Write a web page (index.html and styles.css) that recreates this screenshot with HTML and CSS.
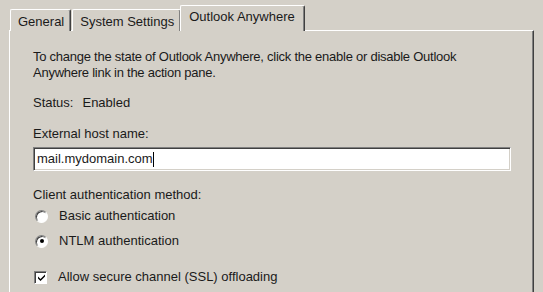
FILE: index.html
```html
<!DOCTYPE html>
<html>
<head>
<meta charset="utf-8">
<link rel="stylesheet" href="styles.css">
</head>
<body>
<div class="dialog">
  <div class="tabs">
    <div class="tab first">General</div>
    <div class="tab">System Settings</div>
    <div class="tab active">Outlook Anywhere</div>
  </div>
  <div class="panel">
    <p class="intro">To change the state of Outlook Anywhere, click the enable or disable Outlook Anywhere link in the action pane.</p>
    <div class="status"><span class="status-label">Status:</span>Enabled</div>
    <div class="field-label">External host name:</div>
    <div class="input"><span class="value">mail.mydomain.com</span><span class="caret"></span></div>
    <div class="group-label">Client authentication method:</div>
    <div class="option basic"><span class="radio"></span>Basic authentication</div>
    <div class="option ntlm"><span class="radio checked"><span class="dot"></span></span>NTLM authentication</div>
    <div class="option check-row"><span class="checkbox"><svg width="9" height="9" viewBox="0 0 9 9"><path d="M1 3.5 L3.5 6 L8 1.5 L8 3.5 L3.5 8 L1 5.5 Z" fill="#000"/></svg></span>Allow secure channel (SSL) offloading</div>
  </div>
</div>
</body>
</html>
```
FILE: styles.css
```css
html, body {
  margin: 0;
  padding: 0;
  background: #d4d0c8;
  width: 543px;
  height: 292px;
  overflow: hidden;
}
body {
  font-family: "Liberation Sans", Arial, sans-serif;
  font-size: 13px;
  line-height: 16px;
  color: #1a1a1a;
}
.dialog {
  padding: 5px 0 0 9px;
}
.tabs {
  display: flex;
  align-items: flex-end;
  height: 26px;
  position: relative;
  z-index: 2;
  margin-bottom: -1px;
}
.tab {
  box-sizing: border-box;
  height: 22px;
  padding: 4px 6px 0 7px;
  background: #d4d0c8;
  border-top: 1px solid #ffffff;
  border-left: 1px solid #ffffff;
  border-right: 1px solid #404040;
  box-shadow: inset -1px 0 0 #808080;
  border-top-left-radius: 2px;
  border-top-right-radius: 2px;
  margin-right: 1px;
  white-space: nowrap;
}
.tab.first {
  margin-left: 1px;
}
.tab.active {
  height: 26px;
  padding: 3px 9px 0 8px;
  margin-left: -2px;
  position: relative;
}
.panel {
  box-sizing: border-box;
  width: 525px;
  height: 262px;
  border-top: 1px solid #ffffff;
  border-left: 1px solid #ffffff;
  border-right: 1px solid #404040;
  box-shadow: inset -1px 0 0 #808080;
  padding: 18px 0 0 23px;
  display: flex;
  flex-direction: column;
  align-items: flex-start;
}
.intro {
  margin: 0;
  width: 470px;
  letter-spacing: -0.25px;
}
.status {
  margin-top: 14px;
}
.status-label {
  margin-right: 9px;
}
.field-label {
  margin-top: 15px;
}
.input {
  box-sizing: border-box;
  margin-top: 5px;
  width: 478px;
  height: 24px;
  background: #ffffff;
  border-top: 1px solid #808080;
  border-left: 1px solid #808080;
  border-right: 1px solid #ffffff;
  border-bottom: 1px solid #ffffff;
  box-shadow: inset 1px 1px 0 #404040, inset -1px -1px 0 #d4d0c8;
  display: flex;
  align-items: center;
  padding-left: 3px;
}
.caret {
  display: inline-block;
  width: 1px;
  height: 15px;
  background: #000;
}
.group-label {
  margin-top: 16px;
}
.option {
  display: flex;
  align-items: center;
  height: 16px;
}
.basic {
  margin-top: 5px;
}
.ntlm {
  margin-top: 9px;
}
.check-row {
  margin-top: 20px;
}
.radio {
  box-sizing: border-box;
  width: 13px;
  height: 13px;
  border-radius: 50%;
  background: #ffffff;
  border: 1px solid;
  border-color: #808080 #ffffff #ffffff #808080;
  box-shadow: inset 1px 1px 0 #404040;
  margin: 0 11px 0 2px;
  display: flex;
  align-items: center;
  justify-content: center;
}
.dot {
  width: 4px;
  height: 4px;
  border-radius: 50%;
  background: #000;
}
.checkbox {
  box-sizing: border-box;
  width: 13px;
  height: 13px;
  background: #ffffff;
  border: 1px solid;
  border-color: #808080 #ffffff #ffffff #808080;
  box-shadow: inset 1px 1px 0 #404040;
  margin: 0 11px 0 1px;
  display: flex;
  align-items: center;
  justify-content: center;
}
.checkbox svg {
  display: block;
  margin: 1px 0 0 1px;
}
```
